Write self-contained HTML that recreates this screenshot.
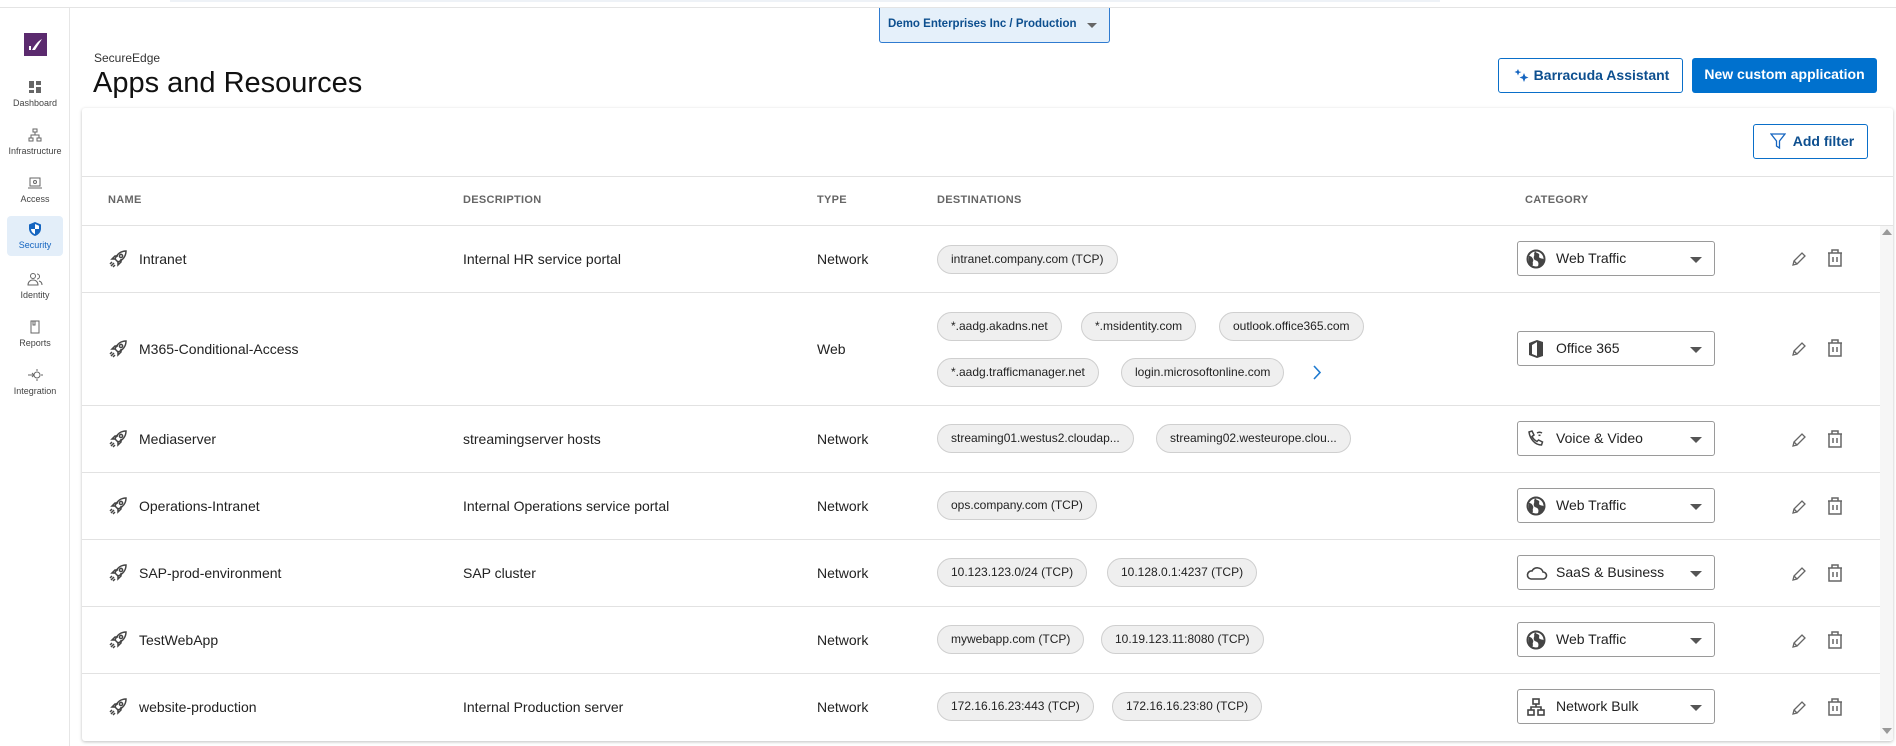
<!DOCTYPE html>
<html><head><meta charset="utf-8"><style>
*{box-sizing:border-box;margin:0;padding:0}
body{width:1896px;height:746px;overflow:hidden;background:#fff;font-family:"Liberation Sans",Arial,sans-serif;color:#222;position:relative}
.abs{position:absolute}
.topline{left:0;top:7px;width:1896px;height:1px;background:#e4e4e4}
.side{left:69px;top:8px;width:1px;height:738px;background:#e6e6e6}
.nav{position:absolute;left:7px;width:56px;text-align:center;font-size:9px;color:#444}
.nav svg{display:block;margin:0 auto 4px}
.hdr{font-size:11px;color:#666;font-weight:bold;letter-spacing:.3px;top:194px}
.row{position:absolute;left:82px;width:1798px;border-bottom:1px solid #e2e2e2}
.cell{position:absolute;font-size:14px;color:#222}
.chip{position:absolute;height:29px;border:1px solid #cfcfcf;background:#efefef;border-radius:15px;font-size:12px;color:#222;line-height:27px;padding:0 13px;white-space:nowrap}
.sel{position:absolute;left:1517px;width:198px;height:35px;border:1px solid #9a9a9a;border-radius:3px;font-size:14px;color:#222;line-height:33px;padding-left:38px}
.sel svg.ic{position:absolute;left:8px;top:7px}
.sel .ar{position:absolute;right:12px;top:15px;width:0;height:0;border-left:6px solid transparent;border-right:6px solid transparent;border-top:6px solid #555}
.btn{position:absolute;border-radius:3px;font-size:14px;font-weight:bold;line-height:33px;text-align:center}
</style></head><body>
<div class="abs topline"></div>
<div class="abs" style="left:170px;top:0;width:1270px;height:2px;background:#eef2f7"></div>
<div class="abs side"></div>
<div class="abs" style="left:24px;top:33px;width:23px;height:23px;background:#5b2a6e"></div>
<svg class="abs" style="left:27px;top:37px" width="17" height="15" viewBox="0 0 17 15"><path d="M2 13h2V9H2zM5 13h3l7-11c-4 2-7 6-10 11z" fill="#fff"/></svg>

<div class="nav" style="top:80px"><svg width="14" height="14" viewBox="0 0 14 14" fill="#666"><rect x="1" y="1" width="5" height="7"/><rect x="8" y="1" width="5" height="4"/><rect x="1" y="10" width="5" height="3"/><rect x="8" y="7" width="5" height="6"/></svg>Dashboard</div>
<div class="nav" style="top:128px"><svg width="14" height="14" viewBox="0 0 14 14" fill="none" stroke="#666"><rect x="5" y="1" width="4" height="3"/><rect x="1" y="10" width="4" height="3"/><rect x="9" y="10" width="4" height="3"/><path d="M7 4v3M3 10V7h8v3"/></svg>Infrastructure</div>
<div class="nav" style="top:176px"><svg width="14" height="14" viewBox="0 0 14 14" fill="none" stroke="#666"><rect x="2" y="2" width="10" height="8"/><path d="M0 12h14"/><circle cx="7" cy="6" r="1.5"/></svg>Access</div>
<div class="abs" style="left:7px;top:216px;width:56px;height:40px;background:#e3eef9;border-radius:4px"></div>
<div class="nav" style="top:222px;color:#1565c0"><svg width="14" height="14" viewBox="0 0 14 14"><path d="M7 0L1 2.5v4C1 10 3.5 12.8 7 14c3.5-1.2 6-4 6-7.5v-4z" fill="#1565c0"/><path d="M7 2v5H3c.2 2.4 1.8 4.3 4 5.1V7h4V3.8z" fill="#fff"/></svg>Security</div>
<div class="nav" style="top:272px"><svg width="16" height="14" viewBox="0 0 16 14" fill="none" stroke="#666"><circle cx="6" cy="4" r="2.5"/><path d="M1 13c0-3 2-5 5-5s5 2 5 5zM10 2a2.5 2.5 0 010 5M12 9c2 .5 3 2 3 4"/></svg>Identity</div>
<div class="nav" style="top:320px"><svg width="14" height="14" viewBox="0 0 14 14" fill="none" stroke="#666"><rect x="3" y="1" width="8" height="12"/><path d="M5 1v4h2V1"/></svg>Reports</div>
<div class="nav" style="top:368px"><svg width="16" height="14" viewBox="0 0 16 14" fill="none" stroke="#666"><circle cx="10" cy="7" r="3"/><path d="M1 7h6M5 5l2 2-2 2M10 1v2M10 11v2M14 7h2"/></svg>Integration</div>

<div class="abs" style="left:879px;top:8px;width:231px;height:35px;background:#e5f0fa;border:1px solid #2f7bd0;border-top:none;border-radius:0 0 3px 3px;font-size:11.5px;color:#0d4f8f;font-weight:bold;line-height:33px;padding-left:8px;white-space:nowrap">Demo Enterprises Inc / Production<span style="position:absolute;right:12px;top:15px;border-left:5px solid transparent;border-right:5px solid transparent;border-top:5px solid #666"></span></div>

<div class="abs" style="left:94px;top:51px;font-size:12px;color:#333">SecureEdge</div>
<div class="abs" style="left:93px;top:67px;font-size:29px;color:#111">Apps and Resources</div>

<div class="btn" style="left:1498px;top:58px;width:185px;height:35px;border:1px solid #0a6fc9;color:#0d4f8f;padding-left:22px">Barracuda Assistant</div>
<svg class="abs" style="left:1514px;top:68px" width="16" height="16" viewBox="0 0 16 16" fill="#1565c0"><path d="M4 1l1 2.5L7.5 4 5 5 4 7.5 3 5 .5 4 3 3z"/><path d="M10 5l1.3 3.2L14.5 9.5l-3.2 1.3L10 14l-1.3-3.2L5.5 9.5l3.2-1.3z"/></svg>
<div class="btn" style="left:1692px;top:58px;width:185px;height:35px;background:#0071ce;color:#fff">New custom application</div>

<div class="abs" style="left:82px;top:108px;width:1811px;height:633px;box-shadow:0 1px 3px rgba(0,0,0,.25);border-radius:3px"></div>
<div class="btn" style="left:1753px;top:124px;width:115px;height:35px;border:1px solid #0a6fc9;color:#0d4f8f;padding-left:26px">Add filter</div>
<svg class="abs" style="left:1770px;top:133px" width="16" height="17" viewBox="0 0 16 17" fill="none" stroke="#1565c0" stroke-width="1.3"><path d="M1 1h14L9.5 8v7L6.5 13V8z"/></svg>

<div class="abs" style="left:82px;top:176px;width:1811px;height:1px;background:#e2e2e2"></div>
<div class="abs hdr" style="left:108px">NAME</div>
<div class="abs hdr" style="left:463px">DESCRIPTION</div>
<div class="abs hdr" style="left:817px">TYPE</div>
<div class="abs hdr" style="left:937px">DESTINATIONS</div>
<div class="abs hdr" style="left:1525px">CATEGORY</div>
<div class="abs" style="left:82px;top:225px;width:1811px;height:1px;background:#e2e2e2"></div>
<div class="abs" style="left:1880px;top:226px;width:13px;height:514px;background:#f6f6f6"></div>
<div class="abs" style="left:1882px;top:229px;border-left:5px solid transparent;border-right:5px solid transparent;border-bottom:6px solid #999"></div>
<div class="abs" style="left:1882px;top:728px;border-left:5px solid transparent;border-right:5px solid transparent;border-top:6px solid #999"></div>

<svg width="0" height="0" style="position:absolute"><defs>
<symbol id="rk" viewBox="0 0 20 20"><g fill="none" stroke="#444" stroke-width="1.5"><path d="M18 2c-5 0-9 3-11 8l3 3c5-2 8-6 8-11z"/><circle cx="13" cy="7" r="1.6"/><path d="M7 10H4l3-3h3M10 13v3l3-3v-3M3 17l3-3M5 18l2-2M2 15l2-2"/></g></symbol>
<symbol id="ed" viewBox="0 0 18 18"><path d="M3 15l1-4 8-8 3 3-8 8zM4 11l3 3" fill="none" stroke="#666" stroke-width="1.3"/></symbol>
<symbol id="tr" viewBox="0 0 20 20"><g fill="none" stroke="#666" stroke-width="1.5"><path d="M3 5h14M4 5v13h12V5M7 5V2h6v3M8 9v5M12 9v5"/></g></symbol>
<symbol id="gl" viewBox="0 0 20 20"><circle cx="10" cy="10" r="8.5" fill="none" stroke="#444" stroke-width="2"/><path d="M3 7c2 0 3 1 4 3s-1 3 0 5l-1 3C3 16 2 12 3 7zM9 2c1 2 3 2 4 3s-1 3 1 4 3 0 4 2c-1 3-3 6-6 7 0-2 1-3 0-5s-3-1-4-3 1-4 0-5z" fill="#444"/></symbol>
</defs></svg>

<div class="row" style="top:225px;height:68px"></div>
<div class="row" style="top:293px;height:113px"></div>
<div class="row" style="top:405px;height:68px"></div>
<div class="row" style="top:472px;height:68px"></div>
<div class="row" style="top:539px;height:68px"></div>
<div class="row" style="top:606px;height:68px"></div>
<div class="row" style="top:673px;height:68px;border-bottom:none"></div>

<svg class="abs" style="left:108px;top:249px" width="20" height="20"><use href="#rk"/></svg>
<div class="cell" style="left:139px;top:251px">Intranet</div>
<div class="cell" style="left:463px;top:251px">Internal HR service portal</div>
<div class="cell" style="left:817px;top:251px">Network</div>
<div class="chip" style="left:937px;top:245px">intranet.company.com (TCP)</div>
<div class="sel" style="top:241px"><svg class="ic" width="20" height="20"><use href="#gl"/></svg>Web Traffic<span class="ar"></span></div>
<svg class="abs" style="left:1790px;top:250px" width="18" height="18"><use href="#ed"/></svg>
<svg class="abs" style="left:1825px;top:248px" width="20" height="20"><use href="#tr"/></svg>

<svg class="abs" style="left:108px;top:339px" width="20" height="20"><use href="#rk"/></svg>
<div class="cell" style="left:139px;top:341px">M365-Conditional-Access</div>
<div class="cell" style="left:817px;top:341px">Web</div>
<div class="chip" style="left:937px;top:312px">*.aadg.akadns.net</div>
<div class="chip" style="left:1081px;top:312px">*.msidentity.com</div>
<div class="chip" style="left:1219px;top:312px">outlook.office365.com</div>
<div class="chip" style="left:937px;top:358px">*.aadg.trafficmanager.net</div>
<div class="chip" style="left:1121px;top:358px">login.microsoftonline.com</div>
<svg class="abs" style="left:1312px;top:364px" width="10" height="17"><path d="M2 2l6 6.5L2 15" fill="none" stroke="#1e7ad0" stroke-width="1.6"/></svg>
<div class="sel" style="top:331px"><svg class="ic" width="20" height="20" viewBox="0 0 20 20"><path d="M3 4l8-3 6 2v14l-6 2-8-3zM11 3v14l-5-2V6z" fill="#444" fill-rule="evenodd"/></svg>Office 365<span class="ar"></span></div>
<svg class="abs" style="left:1790px;top:340px" width="18" height="18"><use href="#ed"/></svg>
<svg class="abs" style="left:1825px;top:338px" width="20" height="20"><use href="#tr"/></svg>

<svg class="abs" style="left:108px;top:429px" width="20" height="20"><use href="#rk"/></svg>
<div class="cell" style="left:139px;top:431px">Mediaserver</div>
<div class="cell" style="left:463px;top:431px">streamingserver hosts</div>
<div class="cell" style="left:817px;top:431px">Network</div>
<div class="chip" style="left:937px;top:424px">streaming01.westus2.cloudap...</div>
<div class="chip" style="left:1156px;top:424px">streaming02.westeurope.clou...</div>
<div class="sel" style="top:421px"><svg class="ic" width="20" height="20" viewBox="0 0 20 20" fill="none" stroke="#444" stroke-width="1.5"><path d="M3 3l3-1 2 4-2 1.5c1 2 3 4 5 5L12.5 11l4 2-1 3C9 16 4 10 3 3zM11 4a5 5 0 015 0M12.5 6.5a2.5 2.5 0 012 0"/></svg>Voice &amp; Video<span class="ar"></span></div>
<svg class="abs" style="left:1790px;top:431px" width="18" height="18"><use href="#ed"/></svg>
<svg class="abs" style="left:1825px;top:429px" width="20" height="20"><use href="#tr"/></svg>

<svg class="abs" style="left:108px;top:496px" width="20" height="20"><use href="#rk"/></svg>
<div class="cell" style="left:139px;top:498px">Operations-Intranet</div>
<div class="cell" style="left:463px;top:498px">Internal Operations service portal</div>
<div class="cell" style="left:817px;top:498px">Network</div>
<div class="chip" style="left:937px;top:491px">ops.company.com (TCP)</div>
<div class="sel" style="top:488px"><svg class="ic" width="20" height="20"><use href="#gl"/></svg>Web Traffic<span class="ar"></span></div>
<svg class="abs" style="left:1790px;top:498px" width="18" height="18"><use href="#ed"/></svg>
<svg class="abs" style="left:1825px;top:496px" width="20" height="20"><use href="#tr"/></svg>

<svg class="abs" style="left:108px;top:563px" width="20" height="20"><use href="#rk"/></svg>
<div class="cell" style="left:139px;top:565px">SAP-prod-environment</div>
<div class="cell" style="left:463px;top:565px">SAP cluster</div>
<div class="cell" style="left:817px;top:565px">Network</div>
<div class="chip" style="left:937px;top:558px">10.123.123.0/24 (TCP)</div>
<div class="chip" style="left:1107px;top:558px">10.128.0.1:4237 (TCP)</div>
<div class="sel" style="top:555px"><svg class="ic" width="22" height="20" viewBox="0 0 22 20"><path d="M5 16h12a3.5 3.5 0 000-7 6 6 0 00-11-1A4 4 0 005 16z" fill="none" stroke="#444" stroke-width="1.6"/></svg>SaaS &amp; Business<span class="ar"></span></div>
<svg class="abs" style="left:1790px;top:565px" width="18" height="18"><use href="#ed"/></svg>
<svg class="abs" style="left:1825px;top:563px" width="20" height="20"><use href="#tr"/></svg>

<svg class="abs" style="left:108px;top:630px" width="20" height="20"><use href="#rk"/></svg>
<div class="cell" style="left:139px;top:632px">TestWebApp</div>
<div class="cell" style="left:817px;top:632px">Network</div>
<div class="chip" style="left:937px;top:625px">mywebapp.com (TCP)</div>
<div class="chip" style="left:1101px;top:625px">10.19.123.11:8080 (TCP)</div>
<div class="sel" style="top:622px"><svg class="ic" width="20" height="20"><use href="#gl"/></svg>Web Traffic<span class="ar"></span></div>
<svg class="abs" style="left:1790px;top:632px" width="18" height="18"><use href="#ed"/></svg>
<svg class="abs" style="left:1825px;top:630px" width="20" height="20"><use href="#tr"/></svg>

<svg class="abs" style="left:108px;top:697px" width="20" height="20"><use href="#rk"/></svg>
<div class="cell" style="left:139px;top:699px">website-production</div>
<div class="cell" style="left:463px;top:699px">Internal Production server</div>
<div class="cell" style="left:817px;top:699px">Network</div>
<div class="chip" style="left:937px;top:692px">172.16.16.23:443 (TCP)</div>
<div class="chip" style="left:1112px;top:692px">172.16.16.23:80 (TCP)</div>
<div class="sel" style="top:689px"><svg class="ic" width="20" height="20" viewBox="0 0 20 20" fill="none" stroke="#444" stroke-width="1.6"><rect x="7" y="2" width="6" height="5"/><rect x="2" y="13" width="6" height="5"/><rect x="12" y="13" width="6" height="5"/><path d="M10 7v3M5 13v-3h10v3"/></svg>Network Bulk<span class="ar"></span></div>
<svg class="abs" style="left:1790px;top:699px" width="18" height="18"><use href="#ed"/></svg>
<svg class="abs" style="left:1825px;top:697px" width="20" height="20"><use href="#tr"/></svg>
</body></html>
